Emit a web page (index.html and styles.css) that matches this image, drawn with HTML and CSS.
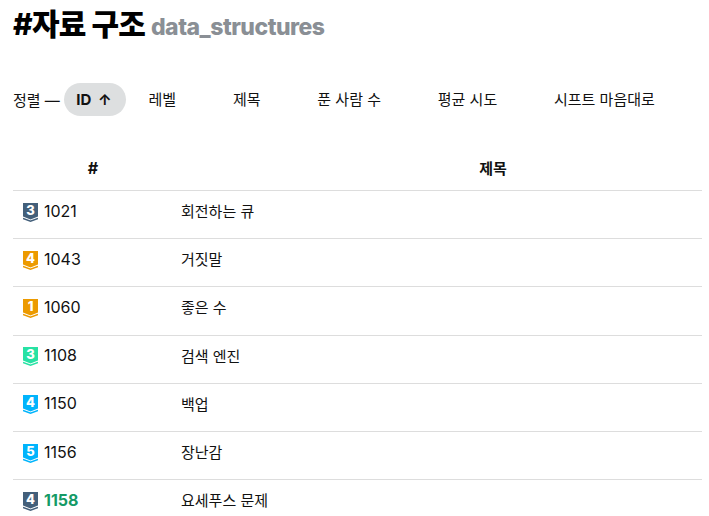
FILE: index.html
```html
<!DOCTYPE html>
<html>
<head>
	<title>#자료 구조</title>
	<meta charset="utf-8">
	<meta name="viewport" content="width=device-width, initial-scale=1">
	<link rel="stylesheet" href="styles.css">
</head>
<body>
    <h1 class="title">#자료 구조 <span class="tag">data_structures</span></h1>

    <div class="sort">
        <span class="sort-label">정렬 —</span>
        <button class="sort-btn active">ID <span class="arrow">↑</span></button>
        <button class="sort-btn">레벨</button>
        <button class="sort-btn">제목</button>
        <button class="sort-btn">푼 사람 수</button>
        <button class="sort-btn">평균 시도</button>
        <button class="sort-btn">시프트 마음대로</button>
    </div>

    <div class="table">
        <div class="row head">
            <div class="col-id">#</div>
            <div class="col-title">제목</div>
        </div>
        <div class="row">
            <div class="col-id">
                <svg class="tier" viewBox="0 0 15 19"><path fill="#435f7a" d="M0 0h15v13.500l-7.500 3-7.500-3z"/><path fill="none" stroke="#435f7a" stroke-width="1.500" d="M0 15.500l7.500 2.600 7.500-2.600"/><text x="7.500" y="11.500" class="tier-num">3</text></svg>
                <span>1021</span>
            </div>
            <div class="col-name">회전하는 큐</div>
        </div>
        <div class="row">
            <div class="col-id">
                <svg class="tier" viewBox="0 0 15 19"><path fill="#ec9a00" d="M0 0h15v13.500l-7.500 3-7.500-3z"/><path fill="none" stroke="#ec9a00" stroke-width="1.500" d="M0 15.500l7.500 2.600 7.500-2.600"/><text x="7.500" y="11.500" class="tier-num">4</text></svg>
                <span>1043</span>
            </div>
            <div class="col-name">거짓말</div>
        </div>
        <div class="row">
            <div class="col-id">
                <svg class="tier" viewBox="0 0 15 19"><path fill="#ec9a00" d="M0 0h15v13.500l-7.500 3-7.500-3z"/><path fill="none" stroke="#ec9a00" stroke-width="1.500" d="M0 15.500l7.500 2.600 7.500-2.600"/><text x="7.500" y="11.500" class="tier-num">1</text></svg>
                <span>1060</span>
            </div>
            <div class="col-name">좋은 수</div>
        </div>
        <div class="row">
            <div class="col-id">
                <svg class="tier" viewBox="0 0 15 19"><path fill="#27e2a4" d="M0 0h15v13.500l-7.500 3-7.500-3z"/><path fill="none" stroke="#27e2a4" stroke-width="1.500" d="M0 15.500l7.500 2.600 7.500-2.600"/><text x="7.500" y="11.500" class="tier-num">3</text></svg>
                <span>1108</span>
            </div>
            <div class="col-name">검색 엔진</div>
        </div>
        <div class="row">
            <div class="col-id">
                <svg class="tier" viewBox="0 0 15 19"><path fill="#00b4fc" d="M0 0h15v13.500l-7.500 3-7.500-3z"/><path fill="none" stroke="#00b4fc" stroke-width="1.500" d="M0 15.500l7.500 2.600 7.500-2.600"/><text x="7.500" y="11.500" class="tier-num">4</text></svg>
                <span>1150</span>
            </div>
            <div class="col-name">백업</div>
        </div>
        <div class="row">
            <div class="col-id">
                <svg class="tier" viewBox="0 0 15 19"><path fill="#00b4fc" d="M0 0h15v13.500l-7.500 3-7.500-3z"/><path fill="none" stroke="#00b4fc" stroke-width="1.500" d="M0 15.500l7.500 2.600 7.500-2.600"/><text x="7.500" y="11.500" class="tier-num">5</text></svg>
                <span>1156</span>
            </div>
            <div class="col-name">장난감</div>
        </div>
        <div class="row">
            <div class="col-id">
                <svg class="tier" viewBox="0 0 15 19"><path fill="#435f7a" d="M0 0h15v13.500l-7.500 3-7.500-3z"/><path fill="none" stroke="#435f7a" stroke-width="1.500" d="M0 15.500l7.500 2.600 7.500-2.600"/><text x="7.500" y="11.500" class="tier-num">4</text></svg>
                <span class="solved">1158</span>
            </div>
            <div class="col-name">요세푸스 문제</div>
        </div>
    </div>
</body>
</html>
```

FILE: styles.css
```css
html, body {
	height: 516px;
	overflow: hidden;
}
body {
	font-family: Inter, "Noto Sans CJK KR", sans-serif;
	font-size: 15px;
	color: #111;
	background-color: #fff;
	margin: 0;
	padding: 0 7px 0 13px;
}
.title {
	font-size: 30px;
	font-weight: 800;
	line-height: 36px;
	letter-spacing: -0.75px;
	color: #000;
	margin: 6px 0 0;
}
.tag {
	font-size: 23px;
	font-weight: 800;
	letter-spacing: -0.5px;
	color: #8a8f95;
}
.sort {
	display: flex;
	align-items: center;
	margin-top: 38px;
	height: 33px;
}
.sort-label {
	margin-right: 4px;
}
.sort-btn {
	font: inherit;
	color: inherit;
	background: none;
	border: 0;
	height: 33px;
	padding: 0 23px 2px;
	margin-right: 10.8px;
	border-radius: 17px;
	white-space: nowrap;
}
.sort-btn.active {
	background-color: #dddfe0;
	font-weight: 700;
	padding: 0 14px 0 12.5px;
	margin-right: 0;
}
.arrow {
	margin-left: 3px;
}
.table {
	margin-top: 25px;
}
.row {
	display: flex;
	align-items: center;
	height: 48.2px;
	padding-bottom: 8px;
	border-bottom: 1px solid #ddd;
	box-sizing: border-box;
}
.row.head {
	height: 50px;
	padding: 4px 0 0;
	font-weight: 700;
}
.head .col-id {
	justify-content: center;
	width: 160px;
	padding: 0;
}
.col-id {
	display: flex;
	align-items: center;
	width: 168px;
	padding-left: 10px;
	font-size: 16px;
	box-sizing: border-box;
}
.col-title {
	flex: 1;
	text-align: center;
	padding-left: 111px;
}
.tier {
	width: 15px;
	height: 19px;
	margin: 3px 6px 0 0;
	flex-shrink: 0;
}
.tier-num {
	font-family: Inter, sans-serif;
	font-size: 13px;
	font-weight: 800;
	fill: #fff;
	text-anchor: middle;
}
.solved {
	color: #159a66;
	font-weight: 700;
}
```
